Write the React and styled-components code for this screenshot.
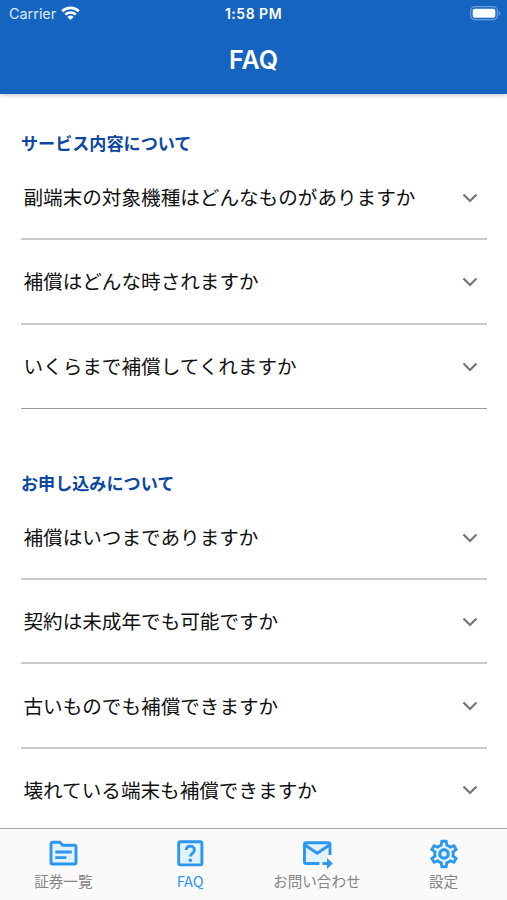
import styled, { createGlobalStyle } from 'styled-components';
import { MdOutlineSettings } from 'react-icons/md';

const sections = [
  {
    title: 'サービス内容について',
    items: [
      { text: '副端末の対象機種はどんなものがありますか' },
      { text: '補償はどんな時されますか' },
      { text: 'いくらまで補償してくれますか', thin: true },
    ],
  },
  {
    title: 'お申し込みについて',
    items: [
      { text: '補償はいつまでありますか' },
      { text: '契約は未成年でも可能ですか' },
      { text: '古いものでも補償できますか' },
      { text: '壊れている端末も補償できますか' },
    ],
  },
];

function FolderIcon() {
  return (
    <TabSvg viewBox="0 0 32 32">
      <path d="M4 5.800a1.500 1.500 0 0 1 1.500-1.500h7.300l3 3h11.700a1.500 1.500 0 0 1 1.500 1.500v15.700a1.500 1.500 0 0 1-1.500 1.500h-22a1.500 1.500 0 0 1-1.500-1.500z" />
      <path d="M8.300 14h16.500M8.300 19.600h11" />
    </TabSvg>
  );
}

function QuestionIcon() {
  return (
    <TabSvg viewBox="0 0 32 32">
      <rect x="4.700" y="3.700" width="23.200" height="23.200" rx="1.600" />
      <path fill="none" d="M12.200 12c0-5.200 8.200-5 8.200 0 0 3.200-4.100 3.400-4.100 6.600" />
      <circle className="solid" cx="16.300" cy="22.300" r="1.800" />
    </TabSvg>
  );
}

function MailIcon() {
  return (
    <TabSvg viewBox="0 0 32 32">
      <path stroke="none" d="M3 5h26v11l-7 10H3z" />
      <path fill="none" d="M18.500 25.500H5A1.500 1.500 0 0 1 3.500 24V6.200A1.500 1.500 0 0 1 5 4.700h22.500A1.500 1.500 0 0 1 29 6.200V17M4 7l12.200 8.300L28.500 7" />
      <path d="M21.500 25.500h7" />
      <path className="solid" d="M26 20l5.800 5.500L26 31z" />
    </TabSvg>
  );
}

function GearIcon() {
  return (
    <Gear>
      <MdOutlineSettings size={34} />
    </Gear>
  );
}

const tabs = [
  { label: '証券一覧', Icon: FolderIcon },
  { label: 'FAQ', Icon: QuestionIcon, active: true },
  { label: 'お問い合わせ', Icon: MailIcon },
  { label: '設定', Icon: GearIcon },
];

function App() {
  return (
    <Screen>
      <GlobalStyle />
      <Header>
        <StatusBar>
          <Carrier>
            Carrier
            <svg width="19" height="15" viewBox="0 0 19 15">
              <g fill="none" stroke="#fff" strokeWidth="2.700">
                <path d="M1.200 5.300a12 12 0 0 1 16.600 0" />
                <path d="M4.300 8.600a7.500 7.500 0 0 1 10.400 0" />
              </g>
              <path fill="#fff" d="M6.400 10.900a4.500 4.500 0 0 1 6.200 0L9.500 14z" />
            </svg>
          </Carrier>
          <Clock>1:58 PM</Clock>
          <Battery>
            <svg width="31" height="15" viewBox="0 0 31 15">
              <rect x=".7" y=".7" width="26.600" height="13" rx="4" fill="none" stroke="#6f9fda" strokeWidth="1.200" />
              <rect x="2.700" y="2.700" width="22.600" height="9" rx="1.800" fill="#fff" />
              <path d="M28.700 5a2.500 2.500 0 0 1 0 4.600z" fill="#6f9fda" />
            </svg>
          </Battery>
        </StatusBar>
        <Title>FAQ</Title>
      </Header>
      <Content>
        {sections.map((section) => (
          <Section key={section.title}>
            <SectionTitle>{section.title}</SectionTitle>
            {section.items.map((item) => (
              <Question key={item.text} $thin={item.thin}>
                <span>{item.text}</span>
                <Chevron viewBox="0 0 16 10">
                  <path d="M1.500 1.500 8 8l6.500-6.500" />
                </Chevron>
              </Question>
            ))}
          </Section>
        ))}
      </Content>
      <TabBar>
        {tabs.map(({ label, Icon, active }) => (
          <Tab key={label} $active={active}>
            <Icon />
            {label}
          </Tab>
        ))}
      </TabBar>
    </Screen>
  );
}

const GlobalStyle = createGlobalStyle`
  * {
    box-sizing: border-box;
  }

  body {
    margin: 0;
    background: #fff;
  }
`;

const Screen = styled.div`
  display: flex;
  flex-direction: column;
  height: 900px;
  overflow: hidden;
  font-family: 'Noto Sans CJK JP', sans-serif;
`;

const Header = styled.header`
  flex: none;
  z-index: 1;
  height: 94px;
  color: #fff;
  background: #1565c0;
  box-shadow: 0 1px 5px rgba(0, 0, 0, 0.25);
  font-family: Inter, sans-serif;
`;

const StatusBar = styled.div`
  display: grid;
  grid-template-columns: 1fr auto 1fr;
  align-items: center;
  height: 27px;
  padding: 0 6px;
`;

const Carrier = styled.div`
  display: flex;
  align-items: center;
  gap: 5px;
  padding-left: 3px;
  font-size: 14.4px;
  color: #dbe9fa;
`;

const Clock = styled.div`
  font-size: 14px;
  font-weight: 600;
  letter-spacing: 0.5px;
`;

const Battery = styled.div`
  display: flex;
  justify-content: flex-end;
`;

const Title = styled.h1`
  margin: 17px 0 0;
  font-size: 25px;
  line-height: 32px;
  font-weight: 600;
  text-align: center;
`;

const Content = styled.main`
  flex: 1;
  min-height: 0;
  overflow: hidden;
  padding: 36px 20px 0 21px;
`;

const Section = styled.section`
  margin-bottom: 61px;
`;

const SectionTitle = styled.h2`
  margin: 0 0 1px;
  font-size: 17.1px;
  line-height: 25px;
  font-weight: 600;
  color: #0d47a1;
`;

const Question = styled.div`
  display: flex;
  align-items: center;
  justify-content: space-between;
  height: 84.3px;
  padding: 1px 9px 0 2.5px;
  border-bottom: ${(props) => (props.$thin ? '1px solid #9a9a9a' : '2px solid #c8c8c8')};
  font-size: 19.6px;
  color: #111;

  span {
    margin-bottom: 2px;
  }
`;

const Chevron = styled.svg`
  width: 16px;
  height: 10px;
  fill: none;
  stroke: #757575;
  stroke-width: 2.2;
`;

const TabBar = styled.nav`
  flex: none;
  display: flex;
  height: 72px;
  border-top: 1px solid #a6a6a6;
  background: #fafafa;
`;

const Tab = styled.div`
  flex: 1;
  display: flex;
  flex-direction: column;
  align-items: center;
  padding-top: 9px;
  font-size: 14.6px;
  line-height: 22px;
  color: ${(props) => (props.$active ? '#2b97ee' : '#858585')};
`;

const TabSvg = styled.svg`
  width: 32px;
  height: 32px;
  fill: #e3f2fd;
  stroke: #2b97ee;
  stroke-width: 2.9;

  .solid {
    fill: #2b97ee;
    stroke: none;
  }
`;

const Gear = styled.div`
  display: flex;
  align-items: center;
  justify-content: center;
  width: 32px;
  height: 32px;
  color: #2b97ee;
  background: radial-gradient(circle, #e3f2fd 9px, transparent 10px);

  svg {
    flex: none;
  }
`;

export default App;
